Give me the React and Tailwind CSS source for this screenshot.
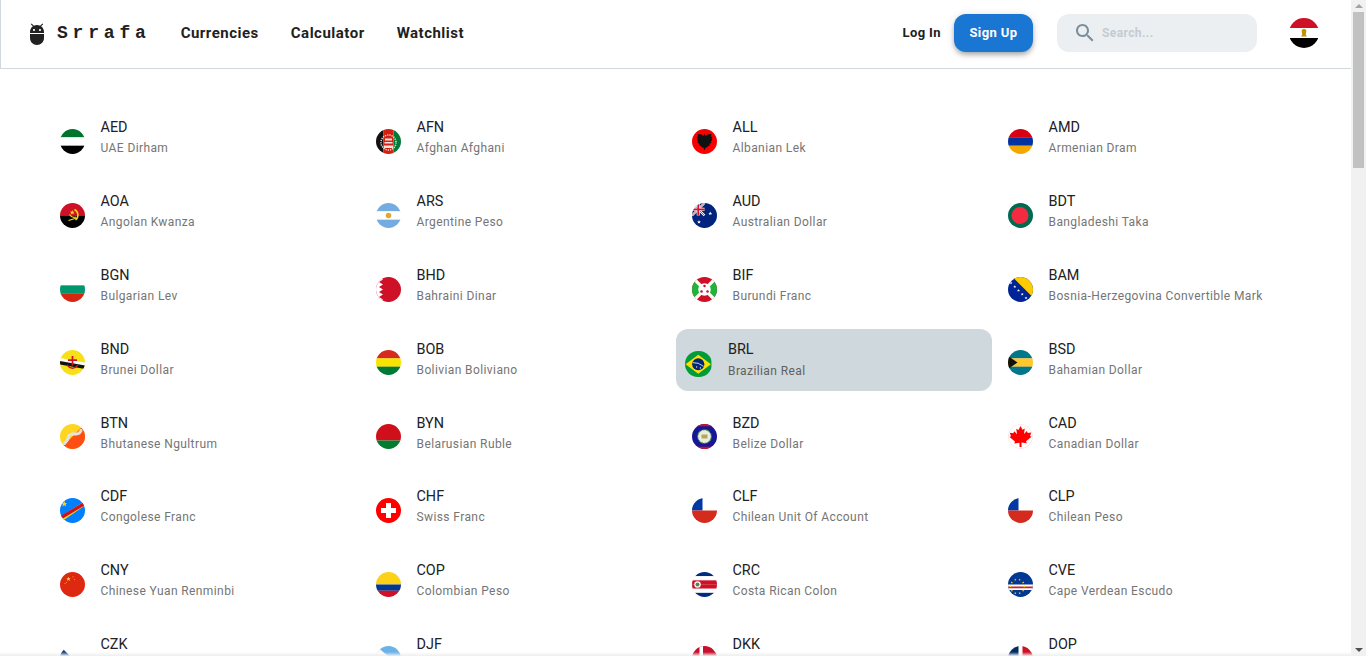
const Stripes = ({ colors }) => (
  <>
    {colors.map((c, i) => (
      <rect key={i} x="0" y={(100 / colors.length) * i} width="100" height={100 / colors.length + 0.5} fill={c} />
    ))}
  </>
);

const Star = ({ x, y, r = 4, fill = "#ffd83d" }) => (
  <polygon
    transform={`translate(${x} ${y}) scale(${r / 10})`}
    points="0,-10 2.9,-3.1 9.5,-3.1 4.7,1.2 5.9,8.1 0,4 -5.9,8.1 -4.7,1.2 -9.5,-3.1 -2.9,-3.1"
    fill={fill}
  />
);

// little flags, drawn on a 100x100 square and clipped round
const flags = {
  AED: <Stripes colors={["#00732f", "#ffffff", "#000000"]} />,
  AFN: (
    <>
      <rect width="30" height="100" fill="#111" />
      <rect x="30" width="40" height="100" fill="#d32011" />
      <rect x="70" width="30" height="100" fill="#007a36" />
      <circle cx="50" cy="54" r="30" fill="none" stroke="#f3d6d0" strokeWidth="6" strokeDasharray="5 4" />
      <rect x="36" y="38" width="28" height="8" fill="#f6e3df" />
      <rect x="34" y="52" width="32" height="6" fill="#f6e3df" />
      <rect x="32" y="66" width="36" height="10" fill="#f6e3df" />
    </>
  ),
  ALL: (
    <>
      <rect width="100" height="100" fill="#f60000" />
      <path d="M50 20 l5 8 6 -6 17 -2 -2 10 6 2 -4 8 4 2 -6 8 2 4 -8 6 1 6 -8 3 -3 6 -5 -2 -5 12 -5 -12 -5 2 -3 -6 -8 -3 1 -6 -8 -6 2 -4 -6 -8 4 -2 -4 -8 6 -2 -2 -10 17 2 6 6z" fill="#111" />
    </>
  ),
  AMD: <Stripes colors={["#d90012", "#0033a0", "#f2a800"]} />,
  AOA: (
    <>
      <Stripes colors={["#ce1126", "#000000"]} />
      <path d="M58 26 A25 25 0 0 1 62 68" fill="none" stroke="#f9d616" strokeWidth="6" />
      <path d="M34 70 L66 60" stroke="#f9d616" strokeWidth="5" />
      <path d="M38 46 Q48 62 64 56" fill="none" stroke="#f9d616" strokeWidth="5" />
      <Star x={49} y={38} r={10} fill="#f9d616" />
    </>
  ),
  ARS: (
    <>
      <Stripes colors={["#74acdf", "#ffffff", "#74acdf"]} />
      <circle cx="50" cy="50" r="11" fill="#e0a63c" />
    </>
  ),
  AUD: (
    <>
      <rect width="100" height="100" fill="#00247d" />
      <path d="M0 0 L50 50 M50 0 L0 50" stroke="#fff" strokeWidth="9" />
      <path d="M0 0 L50 50 M50 0 L0 50" stroke="#cf142b" strokeWidth="3" />
      <path d="M25 0 V50 M0 25 H50" stroke="#fff" strokeWidth="12" />
      <path d="M25 0 V50 M0 25 H50" stroke="#cf142b" strokeWidth="7" />
      <Star x={73} y={42} r={8} fill="#fff" />
      <Star x={28} y={76} r={8} fill="#fff" />
    </>
  ),
  BDT: (
    <>
      <rect width="100" height="100" fill="#006a4e" />
      <circle cx="48" cy="50" r="34" fill="#f42a41" />
    </>
  ),
  BGN: <Stripes colors={["#ffffff", "#00966e", "#d62612"]} />,
  BHD: (
    <>
      <rect width="100" height="100" fill="#ce1126" />
      <path d="M0 0 H12 L28 10 12 20 28 30 12 40 28 50 12 60 28 70 12 80 28 90 12 100 H0z" fill="#fff" />
    </>
  ),
  BIF: (
    <>
      <rect width="100" height="100" fill="#ce1126" />
      <path d="M0 0 L50 50 L0 100z M100 0 L50 50 L100 100z" fill="#1eb53a" />
      <path d="M0 0 L100 100 M100 0 L0 100" stroke="#fff" strokeWidth="13" />
      <circle cx="50" cy="50" r="25" fill="#fff" />
      <circle cx="50" cy="36" r="5" fill="#ce1126" />
      <circle cx="38" cy="58" r="5" fill="#ce1126" />
      <circle cx="62" cy="58" r="5" fill="#ce1126" />
    </>
  ),
  BAM: (
    <>
      <rect width="100" height="100" fill="#002395" />
      <path d="M18 0 H100 V82z" fill="#fecb00" />
      {[18, 33, 48, 63, 78, 92].map((p) => (
        <Star key={p} x={p - 6} y={p + 6} r={6} fill="#fff" />
      ))}
    </>
  ),
  BND: (
    <>
      <rect width="100" height="100" fill="#f7e017" />
      <path d="M0 32 L100 50 V64 L0 46z" fill="#fff" />
      <path d="M0 44 L100 62 V76 L0 58z" fill="#111" />
      <path d="M50 24 V62 M32 40 H68" stroke="#cf1126" strokeWidth="7" />
      <path d="M28 60 Q50 86 72 60" fill="none" stroke="#cf1126" strokeWidth="6" />
    </>
  ),
  BOB: <Stripes colors={["#d52b1e", "#f9e300", "#007934"]} />,
  BRL: (
    <>
      <rect width="100" height="100" fill="#009b3a" />
      <path d="M50 14 L98 50 50 86 2 50z" fill="#fedf00" />
      <circle cx="50" cy="50" r="23" fill="#002776" />
      <path d="M30 44 Q50 42 70 58" fill="none" stroke="#fff" strokeWidth="3" />
      <circle cx="44" cy="60" r="2.5" fill="#fff" />
      <circle cx="58" cy="64" r="2.5" fill="#fff" />
    </>
  ),
  BSD: (
    <>
      <Stripes colors={["#00778b", "#ffc72c", "#00778b"]} />
      <path d="M0 24 L38 50 0 76z" fill="#111" />
    </>
  ),
  BTN: (
    <>
      <rect width="100" height="100" fill="#ffd520" />
      <path d="M100 0 V100 H0z" fill="#ff4e12" />
      <path d="M18 78 Q30 66 34 52 T58 40 T84 26" fill="none" stroke="#e6e3df" strokeWidth="12" strokeLinecap="round" strokeDasharray="10 3" />
    </>
  ),
  BYN: (
    <>
      <rect width="100" height="66" fill="#cf101a" />
      <rect y="66" width="100" height="34" fill="#007c30" />
    </>
  ),
  BZD: (
    <>
      <rect width="100" height="100" fill="#171696" />
      <rect width="100" height="9" fill="#ce1126" />
      <rect y="91" width="100" height="9" fill="#ce1126" />
      <circle cx="50" cy="50" r="27" fill="#e8efe0" />
      <circle cx="50" cy="50" r="27" fill="none" stroke="#5b9a4a" strokeWidth="5" strokeDasharray="4 3" />
      <rect x="38" y="42" width="24" height="16" fill="#b9a55a" />
    </>
  ),
  CAD: (
    <>
      <rect width="100" height="100" fill="#fff" />
      <circle cx="50" cy="50" r="49" fill="none" stroke="#ffc4c4" strokeWidth="2" />
      <path d="M50 8 l8 15 9 -5 -3 22 11 -12 4 8 14 -2 -5 14 6 3 -22 18 3 8 -21 -3 V92 h-8 V75 l-21 3 3 -8 -22 -18 6 -3 -5 -14 14 2 4 -8 11 12 -3 -22 9 5z" fill="#f00" />
    </>
  ),
  CDF: (
    <>
      <rect width="100" height="100" fill="#007fff" />
      <path d="M-5 78 L100 12 V30 L5 95z" fill="#f7d618" />
      <path d="M-5 84 L105 18" stroke="#ce1021" strokeWidth="13" />
      <Star x={17} y={24} r={12} fill="#f7d618" />
    </>
  ),
  CHF: (
    <>
      <rect width="100" height="100" fill="#f00" />
      <path d="M40 20 H60 V40 H80 V60 H60 V80 H40 V60 H20 V40 H40z" fill="#fff" />
    </>
  ),
  CLF: (
    <>
      <rect width="100" height="50" fill="#fff" />
      <rect width="42" height="50" fill="#0039a6" />
      <rect y="50" width="100" height="50" fill="#d52b1e" />
    </>
  ),
  CLP: (
    <>
      <rect width="100" height="50" fill="#fff" />
      <rect width="42" height="50" fill="#0039a6" />
      <rect y="50" width="100" height="50" fill="#d52b1e" />
    </>
  ),
  CNY: (
    <>
      <rect width="100" height="100" fill="#de2910" />
      <Star x={34} y={28} r={9} />
      <Star x={52} y={20} r={3} />
      <Star x={58} y={30} r={3} />
      <Star x={26} y={42} r={3} />
      <Star x={20} y={46} r={3} />
    </>
  ),
  COP: (
    <>
      <rect width="100" height="50" fill="#fcd116" />
      <rect y="50" width="100" height="25" fill="#003893" />
      <rect y="75" width="100" height="25" fill="#ce1126" />
    </>
  ),
  CRC: (
    <>
      <Stripes colors={["#002b7f", "#ffffff", "#ce1126", "#ce1126", "#ffffff", "#002b7f"]} />
      <circle cx="22" cy="50" r="13" fill="#fff" />
      <circle cx="22" cy="50" r="8" fill="#4a8a5a" />
    </>
  ),
  CVE: (
    <>
      <rect width="100" height="100" fill="#003893" />
      <rect y="50" width="100" height="22" fill="#fff" />
      <rect y="58" width="100" height="7" fill="#cf2027" />
      {[0, 36, 72, 108, 144, 180, 216, 252, 288, 324].map((a) => (
        <Star
          key={a}
          x={38 + 28 * Math.cos((a * Math.PI) / 180)}
          y={58 + 28 * Math.sin((a * Math.PI) / 180)}
          r={5}
          fill="#f7d116"
        />
      ))}
    </>
  ),
  CZK: (
    <>
      <rect width="100" height="50" fill="#fff" />
      <rect y="50" width="100" height="50" fill="#d7141a" />
      <path d="M0 0 L50 50 0 100z" fill="#11457e" />
    </>
  ),
  DJF: (
    <>
      <rect width="100" height="50" fill="#6ab2e7" />
      <rect y="50" width="100" height="50" fill="#12ad2b" />
      <path d="M0 0 L60 50 0 100z" fill="#fff" />
    </>
  ),
  DKK: (
    <>
      <rect width="100" height="100" fill="#c8102e" />
      <rect x="30" width="14" height="100" fill="#fff" />
      <rect y="43" width="100" height="14" fill="#fff" />
    </>
  ),
  DOP: (
    <>
      <rect width="100" height="100" fill="#fff" />
      <rect width="42" height="42" fill="#002d62" />
      <rect x="58" width="42" height="42" fill="#ce1126" />
      <rect y="58" width="42" height="42" fill="#ce1126" />
      <rect x="58" y="58" width="42" height="42" fill="#002d62" />
    </>
  ),
  EGP: (
    <>
      <Stripes colors={["#ce1126", "#ffffff", "#000000"]} />
      <path d="M50 36 l8 4 -2 16 4 6 H40 l4 -6 -2 -16z" fill="#c09300" />
    </>
  ),
};

const currencies = [
  ["AED", "UAE Dirham"],
  ["AFN", "Afghan Afghani"],
  ["ALL", "Albanian Lek"],
  ["AMD", "Armenian Dram"],
  ["AOA", "Angolan Kwanza"],
  ["ARS", "Argentine Peso"],
  ["AUD", "Australian Dollar"],
  ["BDT", "Bangladeshi Taka"],
  ["BGN", "Bulgarian Lev"],
  ["BHD", "Bahraini Dinar"],
  ["BIF", "Burundi Franc"],
  ["BAM", "Bosnia-Herzegovina Convertible Mark"],
  ["BND", "Brunei Dollar"],
  ["BOB", "Bolivian Boliviano"],
  ["BRL", "Brazilian Real"],
  ["BSD", "Bahamian Dollar"],
  ["BTN", "Bhutanese Ngultrum"],
  ["BYN", "Belarusian Ruble"],
  ["BZD", "Belize Dollar"],
  ["CAD", "Canadian Dollar"],
  ["CDF", "Congolese Franc"],
  ["CHF", "Swiss Franc"],
  ["CLF", "Chilean Unit Of Account"],
  ["CLP", "Chilean Peso"],
  ["CNY", "Chinese Yuan Renminbi"],
  ["COP", "Colombian Peso"],
  ["CRC", "Costa Rican Colon"],
  ["CVE", "Cape Verdean Escudo"],
  ["CZK", "Czech Koruna"],
  ["DJF", "Djiboutian Franc"],
  ["DKK", "Danish Krone"],
  ["DOP", "Dominican Peso"],
];

function Flag({ code, className }) {
  return (
    <svg viewBox="0 0 100 100" className={`rounded-full shrink-0 ${className}`}>
      {flags[code]}
    </svg>
  );
}

function CurrencyItem({ code, name }) {
  // BRL is the hovered row in the picture
  if (code === "BRL") {
    return (
      <div className="flex items-center h-[62px] pl-[9px] bg-[#cfd8dc] rounded-xl">
        <Flag code={code} className="w-[26.5px] h-[26.5px] mt-2" />
        <div className="ml-[16.5px] pt-[2px]">
          <div className="text-[14.4px] leading-[20px] font-[450] text-[#212121]">{code}</div>
          <div className="text-[12px] leading-[20px] tracking-[0.4px] text-[#616161] mt-[1px]">{name}</div>
        </div>
      </div>
    );
  }
  return (
    <div className="flex items-center h-[62px] pl-4">
      <Flag code={code} className="w-[25px] h-[25px] mt-[6px]" />
      <div className="ml-[15.5px]">
        <div className="text-[14.4px] leading-[20px] font-[450] text-[#212121]">{code}</div>
        <div className="text-[12px] leading-[20px] tracking-[0.4px] text-[#757575]">{name}</div>
      </div>
    </div>
  );
}

export default function App() {
  return (
    <div className="flex h-screen overflow-hidden bg-white font-['Roboto',sans-serif]">
      <div className="relative flex-1 min-w-0 flex flex-col">
        <header className="flex items-center h-[69px] shrink-0 border-l border-b border-[#cfd8dc] pl-[24px] pr-[32px]">
          <svg viewBox="0 0 24 24" className="w-6 h-6 fill-[#212121]">
            <path d="M5 16c0 3.87 3.13 7 7 7s7-3.13 7-7v-4H5v4zM16.12 4.37l2.1-2.1-.82-.83-2.3 2.31C14.16 3.28 13.12 3 12 3s-2.16.28-3.09.75L6.6 1.44l-.82.83 2.1 2.1C6.14 5.64 5 7.68 5 10v1h14v-1c0-2.32-1.14-4.36-2.88-5.63zM9 9c-.55 0-1-.45-1-1s.45-1 1-1 1 .45 1 1-.45 1-1 1zm6 0c-.55 0-1-.45-1-1s.45-1 1-1 1 .45 1 1-.45 1-1 1z" />
          </svg>
          <span className="ml-2 pb-[2px] font-['Liberation_Mono',monospace] font-bold text-[18px] tracking-[4.8px] text-[#212121]">
            Srrafa
          </span>
          <nav className="flex items-center gap-8 ml-[30px] pb-[2px] text-[15px] font-bold tracking-[0.5px] text-[#212121]">
            <span>Currencies</span>
            <span>Calculator</span>
            <span>Watchlist</span>
          </nav>
          <div className="flex items-center ml-auto pb-[2px]">
            <span className="text-[13px] font-bold tracking-[0.4px] text-[#212121]">Log In</span>
            <button className="ml-[13px] w-[79px] h-[38px] rounded-xl bg-[#1976d2] text-white text-[13px] font-bold tracking-[0.4px] shadow-[0_2px_4px_-1px_rgba(0,0,0,0.2),0_4px_5px_0_rgba(0,0,0,0.14),0_1px_10px_0_rgba(0,0,0,0.12)]">
              Sign Up
            </button>
            <div className="flex items-center ml-6 w-[200px] h-[38px] rounded-xl bg-[#eceff1] pl-4">
              <svg viewBox="0 0 24 24" className="w-6 h-6 fill-[#78909c]">
                <path d="M15.5 14h-.79l-.28-.27C15.41 12.59 16 11.11 16 9.5 16 5.91 13.09 3 9.5 3S3 5.91 3 9.5 5.91 16 9.5 16c1.61 0 3.09-.59 4.23-1.57l.27.28v.79l5 4.99L20.49 19l-4.99-5zm-6 0C7.01 14 5 11.99 5 9.5S7.01 5 9.5 5 14 7.01 14 9.5 11.99 14 9.5 14z" />
              </svg>
              <span className="ml-[5px] text-[12px] font-bold tracking-[0.4px] text-[#c3ccd1]">Search...</span>
            </div>
            <Flag code="EGP" className="w-[30px] h-[30px] ml-8" />
          </div>
        </header>

        <main className="flex-1 overflow-hidden pt-[38.45px] pl-[44px] pr-[43px]">
          <div className="grid grid-cols-4 gap-y-[11.8px]">
            {currencies.map(([code, name]) => (
              <CurrencyItem key={code} code={code} name={name} />
            ))}
          </div>
        </main>

        {/* faint shadow of the bottom edge */}
        <div className="absolute left-0 right-0 bottom-0 h-1 bg-gradient-to-b from-transparent to-[#eeeeee] pointer-events-none" />
      </div>

      {/* scrollbar */}
      <div className="flex flex-col items-center w-[15px] shrink-0 bg-[#f1f1f1]">
        <div className="h-3 flex items-center justify-center shrink-0">
          <div className="w-0 h-0 border-x-[4px] border-x-transparent border-b-[4px] border-b-[#a3a3a3]" />
        </div>
        <div className="w-[11px] h-[156px] bg-[#c1c1c1]" />
        <div className="mt-auto h-3 flex items-center justify-center shrink-0">
          <div className="w-0 h-0 border-x-[4px] border-x-transparent border-t-[4px] border-t-[#505050]" />
        </div>
      </div>
    </div>
  );
}
